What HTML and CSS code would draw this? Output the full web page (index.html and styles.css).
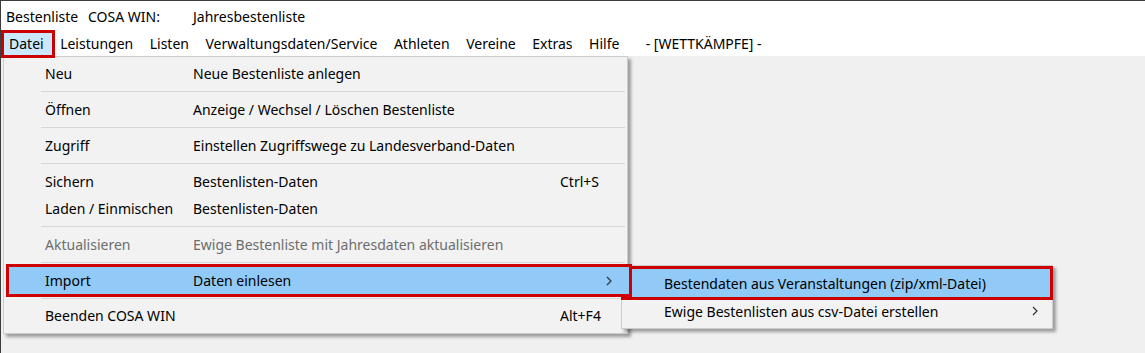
FILE: index.html
```html
<!DOCTYPE html>
<html lang="de">
  <head>
    <meta charset="UTF-8" />
    <title>Bestenliste COSA WIN</title>
    <link rel="stylesheet" href="styles.css">
  </head>
  <body>
    <div class="window">
      <!-- Title line -->
      <div class="titlebar">
        <span class="t-app">Bestenliste</span>
        <span class="t-prog">COSA WIN:</span>
        <span class="t-doc">Jahresbestenliste</span>
      </div>

      <!-- Menu bar -->
      <div class="menubar">
        <span class="mb-item active">Datei</span>
        <span class="mb-item">Leistungen</span>
        <span class="mb-item">Listen</span>
        <span class="mb-item">Verwaltungsdaten/Service</span>
        <span class="mb-item">Athleten</span>
        <span class="mb-item">Vereine</span>
        <span class="mb-item">Extras</span>
        <span class="mb-item">Hilfe</span>
        <span class="mb-info">- [WETTKÄMPFE] -</span>
      </div>

      <div class="client">
        <!-- Datei dropdown -->
        <div class="menu main-menu">
          <div class="row"><span>Neu</span><span>Neue Bestenliste anlegen</span><span></span><span></span></div>
          <div class="sep"></div>
          <div class="row"><span>Öffnen</span><span>Anzeige / Wechsel / Löschen Bestenliste</span><span></span><span></span></div>
          <div class="sep"></div>
          <div class="row"><span>Zugriff</span><span>Einstellen Zugriffswege zu Landesverband-Daten</span><span></span><span></span></div>
          <div class="sep"></div>
          <div class="row"><span>Sichern</span><span>Bestenlisten-Daten</span><span>Ctrl+S</span><span></span></div>
          <div class="row"><span>Laden / Einmischen</span><span>Bestenlisten-Daten</span><span></span><span></span></div>
          <div class="sep"></div>
          <div class="row disabled"><span>Aktualisieren</span><span>Ewige Bestenliste mit Jahresdaten aktualisieren</span><span></span><span></span></div>
          <div class="sep"></div>
          <div class="row hot"><span>Import</span><span>Daten einlesen</span><span></span>
            <span class="arrow"><svg width="6" height="10" viewBox="0 0 6 10"><path d="M1 1 L5 5 L1 9" fill="none" stroke="#333" stroke-width="1.2"/></svg></span>
          </div>
          <div class="sep sep-after-hot"></div>
          <div class="row"><span>Beenden COSA WIN</span><span></span><span>Alt+F4</span><span></span></div>
        </div>

        <!-- Import submenu -->
        <div class="menu sub-menu">
          <div class="sub-row hot"><span>Bestendaten aus Veranstaltungen (zip/xml-Datei)</span><span></span></div>
          <div class="sub-row"><span>Ewige Bestenlisten aus csv-Datei erstellen</span>
            <span class="arrow"><svg width="6" height="10" viewBox="0 0 6 10"><path d="M1 1 L5 5 L1 9" fill="none" stroke="#333" stroke-width="1.2"/></svg></span>
          </div>
        </div>
      </div>
    </div>
  </body>
</html>
```

FILE: styles.css
```css
html,
body {
  margin: 0;
  padding: 0;
  height: 100%;
}
body {
  font-family: "Noto Sans", "Open Sans", sans-serif;
  font-size: 14px;
  color: #000;
  background: #f0f0f0;
}
.window {
  height: 100%;
  display: flex;
  flex-direction: column;
  border-top: 1px solid #3c3c3c;
  border-left: 1px solid #3c3c3c;
  box-sizing: border-box;
}
.titlebar {
  background: #fff;
  height: 30px;
  display: flex;
  align-items: center;
  padding-left: 5px;
}
.t-app {
  width: 82px;
}
.t-prog {
  width: 105px;
}
.menubar {
  background: #fff;
  height: 25px;
  display: flex;
  align-items: center;
  padding-left: 1px;
}
.mb-item {
  padding: 0 7.25px;
  line-height: 21px;
  border: 1px solid transparent;
}
.mb-item.active {
  position: relative;
  z-index: 5;
  background: #cce8ff;
  padding-left: 6px;
}
/* red marker frame around the open menu title */
.mb-item.active::after {
  content: "";
  position: absolute;
  left: -2px;
  right: -4px;
  top: -3px;
  bottom: -4px;
  border: 3px solid #cc0000;
}
.mb-info {
  margin-left: 18px;
}
.client {
  flex: 1;
  position: relative;
  background: #f0f0f0;
}
.menu {
  position: absolute;
  background: #f2f2f2;
  border: 1px solid #cccccc;
  box-shadow: 3px 3px 3px rgba(0, 0, 0, 0.35);
  box-sizing: border-box;
}
.main-menu {
  left: 2px;
  top: 0;
  width: 625px;
  padding: 3px 2px 4px 2px;
}
.row {
  display: grid;
  grid-template-columns: 148px 367px 44px 1fr;
  height: 27px;
  align-items: center;
  padding-left: 39px;
}
.row.disabled {
  color: #6d6d6d;
}
.hot {
  background: #91c9f7;
  outline: 3px solid #cc0000;
}
.row.hot {
  position: relative;
  z-index: 2;
  margin: 2px -4px 0 3px;
  padding-left: 36px;
}
.arrow {
  display: flex;
  align-items: center;
  padding-left: 2px;
}
.sep {
  height: 1px;
  background: #d7d7d7;
  margin: 4px 0 4px 35px;
}
.sep-after-hot {
  margin-bottom: 3px;
}
.sub-menu {
  left: 620px;
  top: 209px;
  width: 432px;
  padding: 3px 2px 3px 2px;
  z-index: 1;
}
.sub-row {
  display: flex;
  justify-content: space-between;
  align-items: center;
  height: 28px;
  padding: 0 12px 0 40px;
}
```
